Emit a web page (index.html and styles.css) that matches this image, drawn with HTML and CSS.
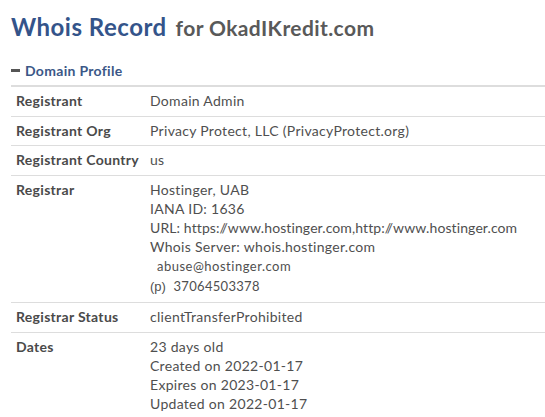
FILE: index.html
```html
<!DOCTYPE html>
<html>
<head>
<meta charset="utf-8">
<link rel="stylesheet" href="styles.css">
</head>
<body>
<div class="page">
  <h1 class="title"><span class="title-main">Whois Record</span> <span class="title-for">for OkadIKredit.com</span></h1>
  <div class="section-head"><span class="minus"></span>Domain Profile</div>
  <table class="whois">
    <tr><th>Registrant</th><td>Domain Admin</td></tr>
    <tr><th>Registrant Org</th><td>Privacy Protect, LLC (PrivacyProtect.org)</td></tr>
    <tr><th>Registrant Country</th><td>us</td></tr>
    <tr><th>Registrar</th><td>
      <div>Hostinger, UAB</div>
      <div>IANA ID: 1636</div>
      <div class="url">URL: https:<span class="sl">/</span>/www.hostinger.com,http:<span class="sl">/</span>/www.hostinger.com</div>
      <div>Whois Server: whois.hostinger.com</div>
      <div class="contact">
        <div class="email">abuse@hostinger.com</div>
        <div class="phone"><span class="p">(p)</span> 37064503378</div>
      </div>
    </td></tr>
    <tr><th>Registrar Status</th><td>clientTransferProhibited</td></tr>
    <tr><th>Dates</th><td>
      <div>23 days old</div>
      <div>Created on 2022-01-17</div>
      <div>Expires on 2023-01-17</div>
      <div>Updated on 2022-01-17</div>
    </td></tr>
  </table>
</div>
</body>
</html>
```
FILE: styles.css
```css
html, body { margin: 0; padding: 0; background: #fff; }
body { font-family: Lato, "Open Sans", sans-serif; color: #4a4a4a; font-variant-ligatures: none; }
.page { padding: 12px 0 0 11px; }
.title { margin: 0; font-size: 24px; line-height: 30px; font-weight: 700; }
.title-main { color: #34548a; letter-spacing: 0.5px; }
.title-for { color: #595959; font-size: 21px; letter-spacing: 0.4px; margin-left: 3px; }
.section-head { margin-top: 19px; font-size: 14px; line-height: 17px; font-weight: 700; color: #3b5787; letter-spacing: 0.3px; display: flex; align-items: center; }
.minus { display: inline-block; width: 9px; height: 3px; background: #555; margin-right: 5px; }
.whois { width: 100%; border-collapse: collapse; margin-top: 6px; border-top: 2px solid #ddd; font-size: 14px; letter-spacing: 0.3px; }
.whois th, .whois td { text-align: left; vertical-align: top; border-bottom: 1px solid #ddd; padding: 4px 5px 5.5px 5px; line-height: 19px; }
.whois th { width: 124px; font-weight: 700; color: #4a4a4a; white-space: nowrap; }
.whois td { color: #4f4f4f; font-weight: 400; }
.whois td div { line-height: 19px; }
.whois td .contact div { line-height: 20px; }
.url { letter-spacing: 0.1px; }
.sl { letter-spacing: -4.5px; }
.email { font-size: 13px; letter-spacing: 0.5px; padding-left: 7px; }
.phone { font-size: 13px; letter-spacing: 0.3px; }
.p { font-family: "Liberation Sans", Arial, sans-serif; font-size: 13px; letter-spacing: 0; margin-right: 4px; }
```
